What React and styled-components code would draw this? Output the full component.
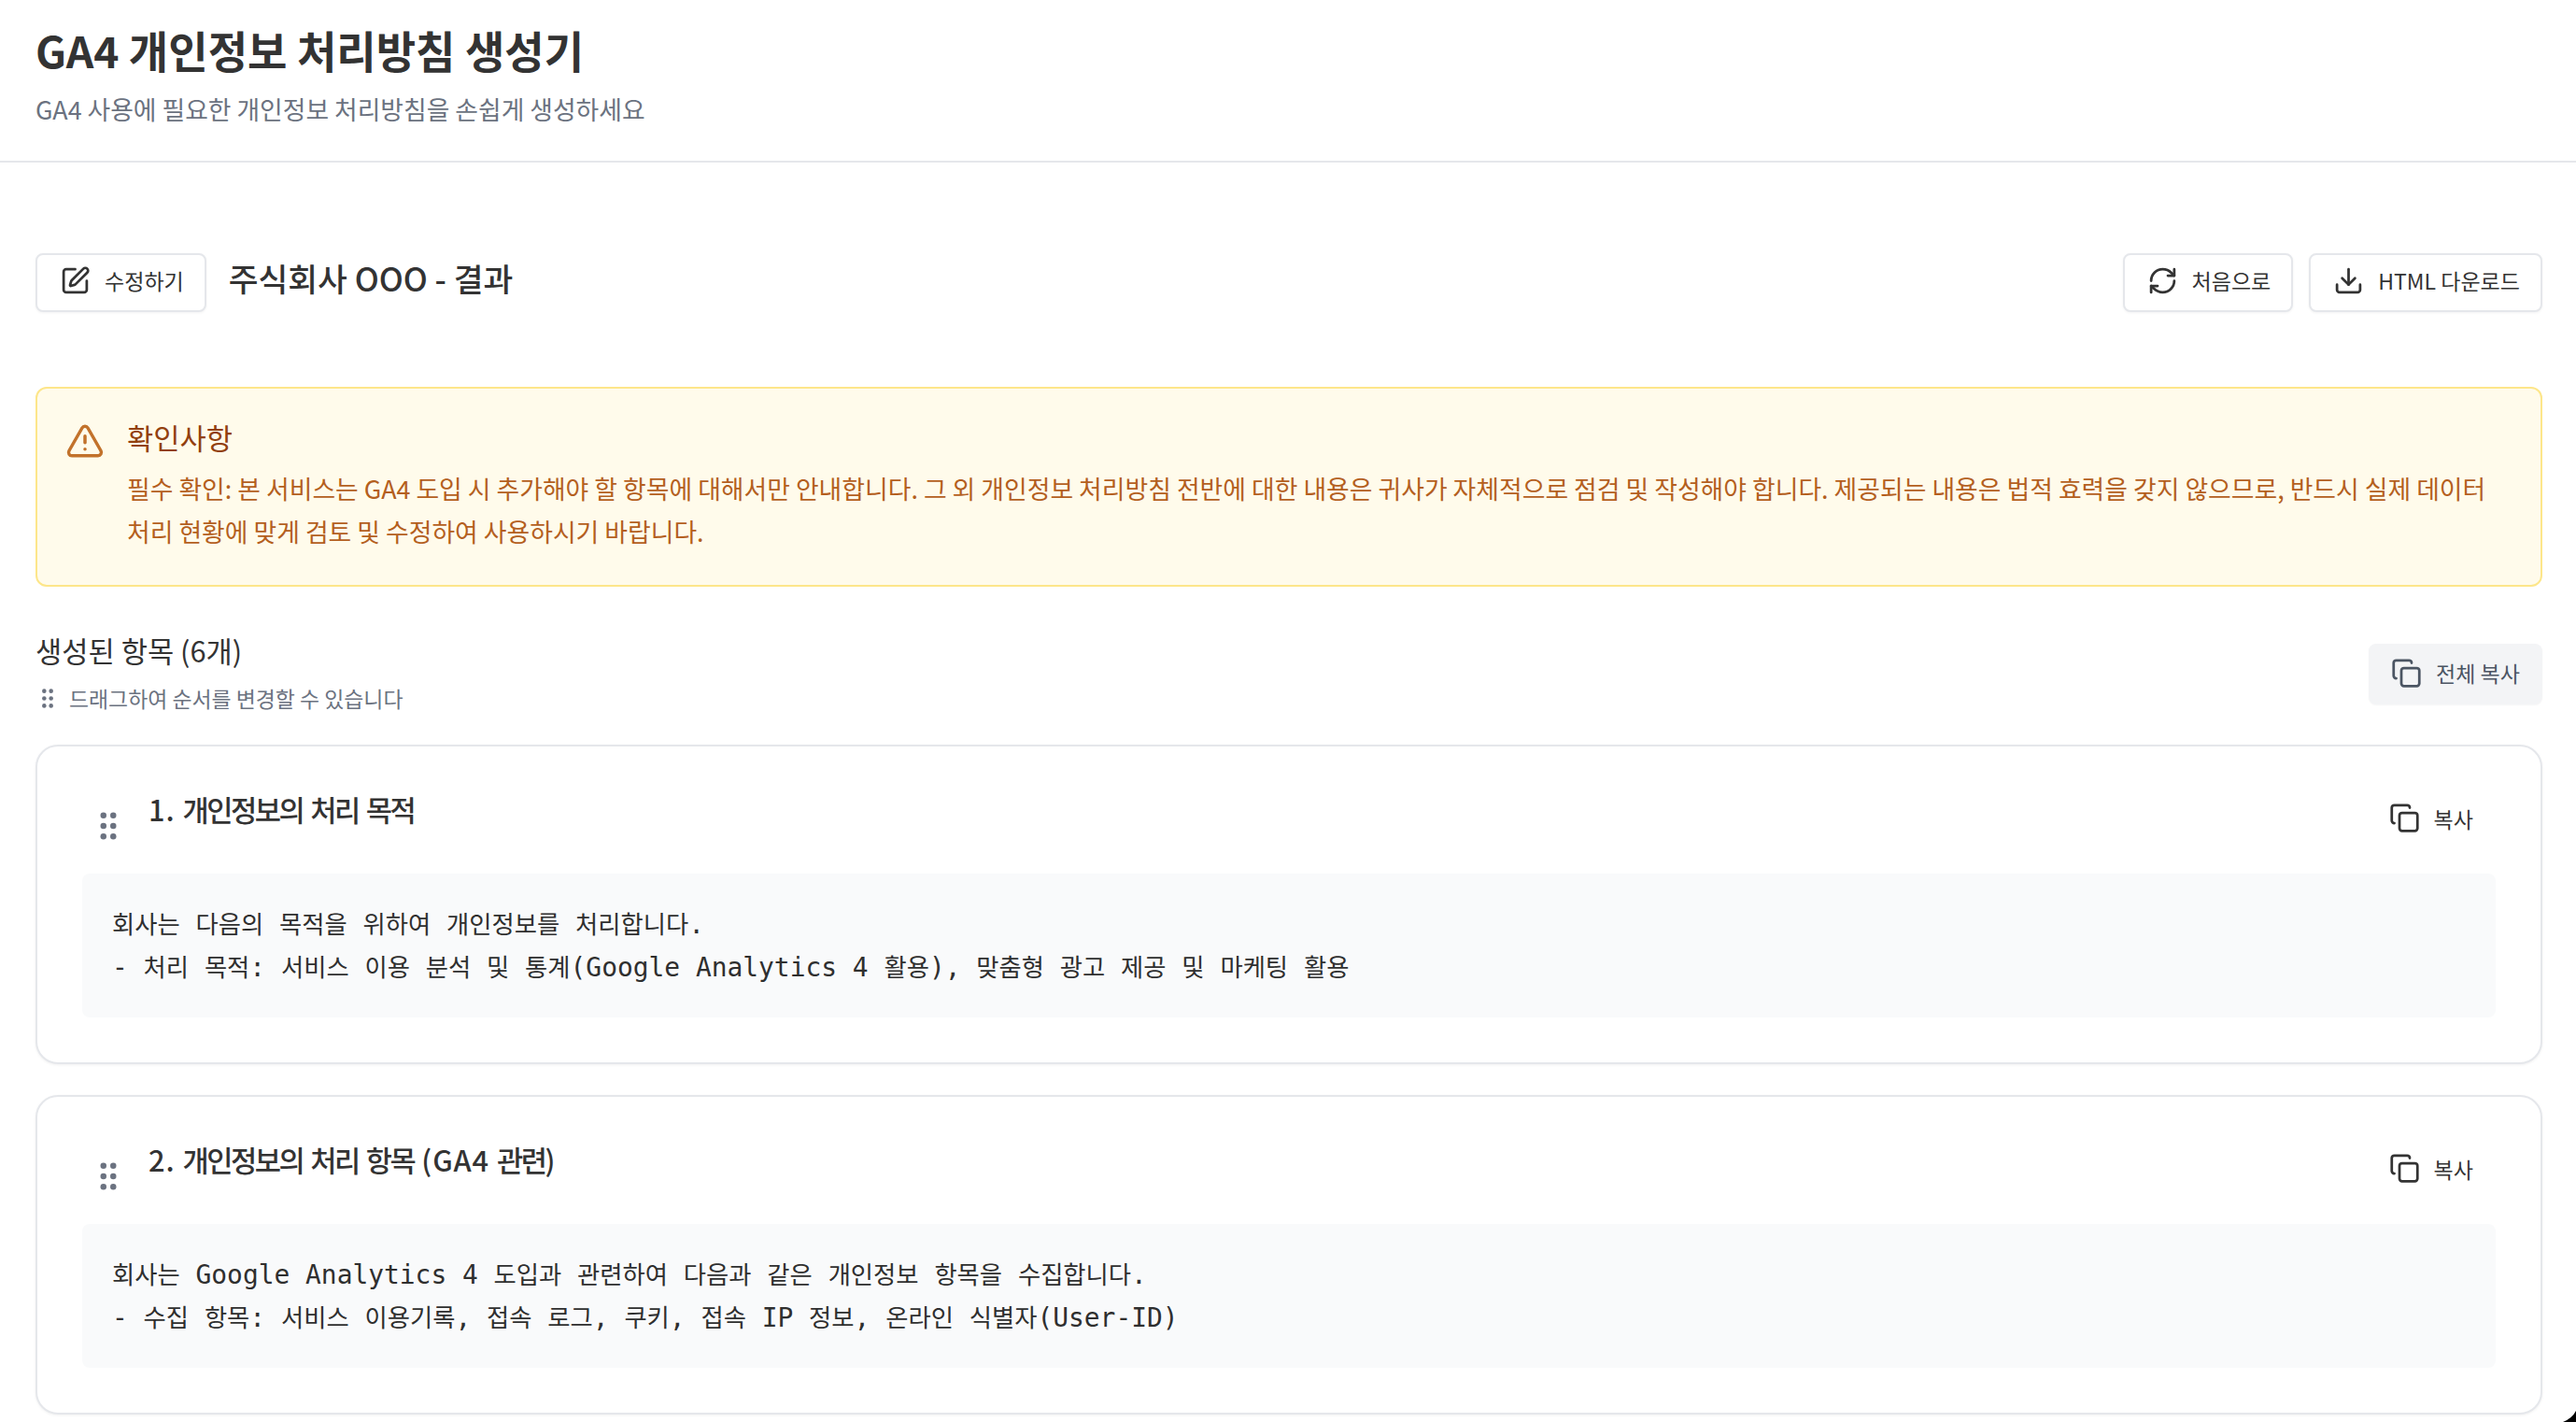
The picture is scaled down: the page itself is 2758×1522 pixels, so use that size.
import React from "react";
import styled, { createGlobalStyle } from "styled-components";

const FONT = `"Noto Sans CJK KR", "Noto Sans", sans-serif`;
const Global = createGlobalStyle`
  html, body { margin: 0; padding: 0; background: #fff; }
  body { font-family: ${FONT}; color: #333; overflow: hidden; height: 1522px; }
  * { box-sizing: border-box; }
`;
const Page = styled.div`width: 2758px; height: 1522px; overflow: hidden; position: relative;`;
const Corner = styled.svg`position: absolute; right: 0; bottom: 0;`;
const Header = styled.header`height: 174px; padding: 23px 38px 0; border-bottom: 2px solid #e5e7eb;`;
const Title = styled.h1`margin: 0; font-size: 46.08px; line-height: 60px; font-weight: 700; color: #333;`;
const Subtitle = styled.p`margin: 16px 0 0; font-size: 26.8px; line-height: 36px; font-weight: 400; color: #6b7280;`;
const Main = styled.main`padding: 96px 36px 0 38px; display: flex; flex-direction: column;`;
const TopBar = styled.div`display: flex; justify-content: space-between; align-items: center; height: 64px;`;
const TopLeft = styled.div`display: flex; align-items: center; gap: 24px;`;
const TopRight = styled.div`display: flex; align-items: center; gap: 17px;`;
const PageTitle = styled.h2`margin: -10px 0 0; font-size: 34.56px; line-height: 48px; font-weight: 500; color: #333;`;
const OutlineButton = styled.button`
  display: flex; align-items: center; gap: 15px; height: 63px; padding: 0 22px 4px 24px;
  background: #fff; border: 2px solid #e5e7eb; border-radius: 8px; box-shadow: 0 1px 3px rgba(0,0,0,.05);
  font: 400 23.04px/32px ${FONT}; color: #333;
`;
const Alert = styled.section`
  margin-top: 80px; height: 214px; padding: 32px 32px 0 30px; display: flex; gap: 24px;
  background: #fffbeb; border: 2px solid #fde68a; border-radius: 12px;
`;
const AlertIcon = styled.div`color: #c2722b; margin-top: 3px; flex: none; width: 42px; height: 42px;`;
const AlertBody = styled.div`flex: 1;`;
const AlertTitle = styled.h3`margin: 0 0 12px; font-size: 30.72px; line-height: 40px; font-weight: 400; color: #92400e;`;
const AlertText = styled.p`margin: 0; font-size: 26.85px; line-height: 46px; color: #b45f1e;`;
const SectionHead = styled.div`display: flex; justify-content: space-between; align-items: flex-start; margin-top: 47px; height: 107px;`;
const SectionTitle = styled.h3`margin: 0; font-size: 30.72px; line-height: 42px; font-weight: 400; color: #333;`;
const Hint = styled.div`display: flex; align-items: center; gap: 16px; margin-top: 13px; font-size: 22.9px; line-height: 34px; color: #6b7280; padding-left: 6px;`;
const CopyAll = styled.button`
  display: flex; align-items: center; gap: 15px; height: 65px; margin-top: 14px; padding: 0 24px 3px;
  background: #f3f4f6; border: none; border-radius: 8px; box-shadow: 0 1px 2px rgba(0,0,0,.04);
  font: 400 23.04px/32px ${FONT}; color: #4b5563;
`;
const Cards = styled.div`display: flex; flex-direction: column; gap: 33px; margin-top: 15px;`;
const Card = styled.article`
  height: 342px; padding: 48px 48px 48px; background: #fff;
  border: 2px solid #e5e7eb; border-radius: 24px; box-shadow: 0 1px 3px rgba(0,0,0,.06);
`;
const CardHead = styled.div`display: flex; align-items: flex-start; height: 88px;`;
const Grip = styled.div`color: #6b7280; width: 20px; margin: 22px 0 0 18px; flex: none; line-height: 0;`;
const CardTitle = styled.h4`margin: -3px 0 0 33px; flex: 1; font-size: 30.72px; line-height: 44px; font-weight: 500; color: #333; letter-spacing: -2.5px;`;
const TitleLatin = styled.span`letter-spacing: 1px;`;
const CopyButton = styled.button`
  display: flex; align-items: center; gap: 15px; margin: 12px 24px 0 0; padding: 0; background: none; border: none;
  font: 400 23.04px/32px ${FONT}; color: #333;
`;
const CodeBox = styled.div`
  height: 154px; padding: 32px; background: #f9fafb; border-radius: 8px;
  font: 400 26.35px/46px "DejaVu Sans Mono", "Noto Sans CJK KR", monospace; color: #2f2f2f;
`;
const CodeLine = styled.div`height: 46px; white-space: pre;`;
const CodeLatin = styled.span`font-size: 27.9px; line-height: 30px;`;

const splitRuns = (text, Latin) =>
  text.split(/([\x00-\x7f]+)/).map((run, i) => (i % 2 ? <Latin key={i}>{run}</Latin> : run));

const I = ({ size = 33, sw = 2, children }) => (
  <svg width={size} height={size} viewBox="0 0 24 24" fill="none" stroke="currentColor" strokeWidth={sw} strokeLinecap="round" strokeLinejoin="round">{children}</svg>
);
const EditIcon = () => <I><path d="M12 3H5a2 2 0 0 0-2 2v14a2 2 0 0 0 2 2h14a2 2 0 0 0 2-2v-7" /><path d="M18.375 2.625a1 1 0 0 1 3 3l-9.013 9.014a2 2 0 0 1-.853.505l-2.873.84a.5.5 0 0 1-.62-.62l.84-2.873a2 2 0 0 1 .506-.852z" /></I>;
const RefreshIcon = () => <I><path d="M3 12a9 9 0 0 1 9-9 9.75 9.75 0 0 1 6.74 2.74L21 8" /><path d="M21 3v5h-5" /><path d="M21 12a9 9 0 0 1-9 9 9.75 9.75 0 0 1-6.74-2.74L3 16" /><path d="M8 16H3v5" /></I>;
const DownloadIcon = () => <I><path d="M12 15V3" /><path d="M21 15v4a2 2 0 0 1-2 2H5a2 2 0 0 1-2-2v-4" /><path d="m7 10 5 5 5-5" /></I>;
const CopyIcon = () => <I><rect width="14" height="14" x="8" y="8" rx="2" ry="2" /><path d="M4 16c-1.1 0-2-.9-2-2V4c0-1.1.9-2 2-2h10c1.1 0 2 .9 2 2" /></I>;
const WarnIcon = () => <I size={42}><path d="m21.73 18-8-14a2 2 0 0 0-3.48 0l-8 14A2 2 0 0 0 4 21h16a2 2 0 0 0 1.73-3" /><path d="M12 9v4" /><path d="M12 17h.01" /></I>;
const GripIcon = ({ size }) => (
  <svg width={size} height={size * 1.5} viewBox="0 0 8 12" fill="currentColor">
    {[1.5, 6, 10.5].map(y => [1.9, 6.1].map(x => <circle key={`${x}-${y}`} cx={x} cy={y} r="1.3" />))}
  </svg>
);

const items = [
  { title: "1. 개인정보의 처리 목적", lines: ["회사는 다음의 목적을 위하여 개인정보를 처리합니다.", "- 처리 목적: 서비스 이용 분석 및 통계(Google Analytics 4 활용), 맞춤형 광고 제공 및 마케팅 활용"] },
  { title: "2. 개인정보의 처리 항목 (GA4 관련)", lines: ["회사는 Google Analytics 4 도입과 관련하여 다음과 같은 개인정보 항목을 수집합니다.", "- 수집 항목: 서비스 이용기록, 접속 로그, 쿠키, 접속 IP 정보, 온라인 식별자(User-ID)"] },
];

export default function App() {
  return (
    <Page>
      <Global />
      <Header>
        <Title>GA4 개인정보 처리방침 생성기</Title>
        <Subtitle>GA4 사용에 필요한 개인정보 처리방침을 손쉽게 생성하세요</Subtitle>
      </Header>
      <Main>
        <TopBar>
          <TopLeft>
            <OutlineButton><EditIcon />수정하기</OutlineButton>
            <PageTitle>주식회사 OOO - 결과</PageTitle>
          </TopLeft>
          <TopRight>
            <OutlineButton><RefreshIcon />처음으로</OutlineButton>
            <OutlineButton><DownloadIcon />HTML 다운로드</OutlineButton>
          </TopRight>
        </TopBar>
        <Alert>
          <AlertIcon><WarnIcon /></AlertIcon>
          <AlertBody>
            <AlertTitle>확인사항</AlertTitle>
            <AlertText>필수 확인: 본 서비스는 GA4 도입 시 추가해야 할 항목에 대해서만 안내합니다. 그 외 개인정보 처리방침 전반에 대한 내용은 귀사가 자체적으로 점검 및 작성해야 합니다. 제공되는 내용은 법적 효력을 갖지 않으므로, 반드시 실제 데이터 처리 현황에 맞게 검토 및 수정하여 사용하시기 바랍니다.</AlertText>
          </AlertBody>
        </Alert>
        <SectionHead>
          <div>
            <SectionTitle>생성된 항목 (6개)</SectionTitle>
            <Hint><GripIcon size={14} />드래그하여 순서를 변경할 수 있습니다</Hint>
          </div>
          <CopyAll><CopyIcon />전체 복사</CopyAll>
        </SectionHead>
        <Cards>
          {items.map(it => (
            <Card key={it.title}>
              <CardHead>
                <Grip><GripIcon size={20} /></Grip>
                <CardTitle>{splitRuns(it.title, TitleLatin)}</CardTitle>
                <CopyButton><CopyIcon />복사</CopyButton>
              </CardHead>
              <CodeBox>
                {it.lines.map(line => <CodeLine key={line}>{splitRuns(line, CodeLatin)}</CodeLine>)}
              </CodeBox>
            </Card>
          ))}
        </Cards>
      </Main>
      <Corner width="14" height="12" viewBox="0 0 14 12"><path d="M14 0 L14 12 L0 12 Q10 8 14 0 Z" fill="#000" /></Corner>
    </Page>
  );
}
